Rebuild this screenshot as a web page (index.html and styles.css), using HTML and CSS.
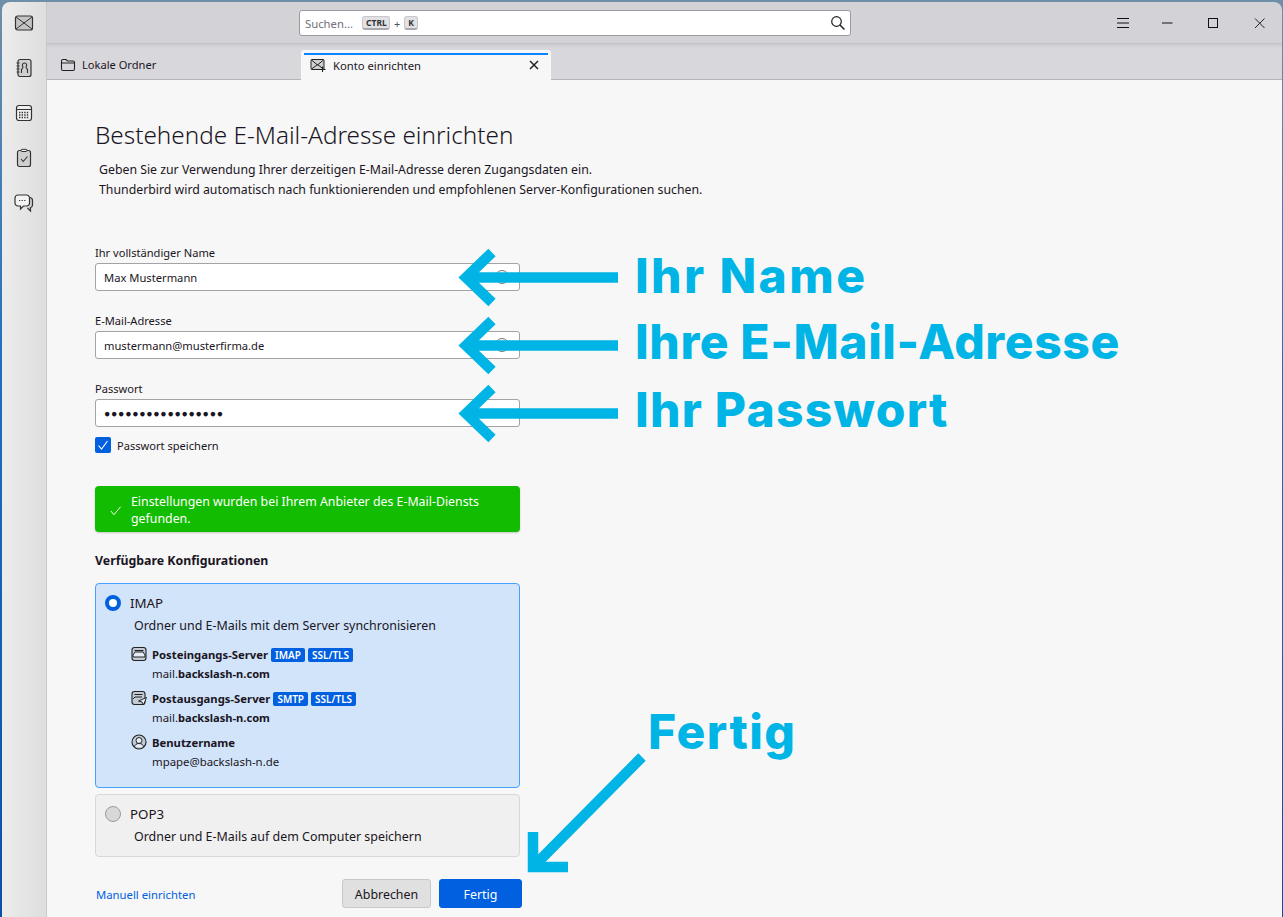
FILE: index.html
```html
<!DOCTYPE html>
<html lang="de">
<head>
<meta charset="utf-8">
<title>Konto einrichten</title>
<link rel="stylesheet" href="styles.css">
</head>
<body>
<div class="window">
  <nav class="rail">
    <svg class="rail-icon" viewBox="0 0 20 20"><rect x="1.500" y="3" width="17" height="14" rx="2" fill="#c4c4c4" stroke="#333" stroke-width="1.200"/><path d="M2 4l8 6 8-6M2 16l8-6 8 6" fill="none" stroke="#333" stroke-width="1"/></svg>
    <svg class="rail-icon" viewBox="0 0 20 20"><rect x="4" y="1.500" width="13" height="17" rx="2" fill="#cfcfcf" stroke="#333" stroke-width="1.200"/><path d="M2.500 5h3M2.500 8h3M2.500 11h3M2.500 14h3" stroke="#333"/><path d="M7.500 15v-3.500c1-1 1.500-1.500 1.500-2.500-1-1-1-4 1.500-4s2.500 3 1.500 4c0 1 .5 1.500 1.500 2.500V15" fill="none" stroke="#333" stroke-width="1.100"/></svg>
    <svg class="rail-icon" viewBox="0 0 20 20"><rect x="2.500" y="2.500" width="15" height="15" rx="2.500" fill="#efefef" stroke="#333" stroke-width="1.200"/><path d="M2.500 6.500h15" stroke="#333" stroke-width="1.200"/><path d="M5 9.500h10M5 12h10M5 14.500h10" stroke="#333" stroke-width="1.300" stroke-dasharray="1.400 1.200"/></svg>
    <svg class="rail-icon" viewBox="0 0 20 20"><rect x="3.500" y="2.500" width="13" height="16" rx="2" fill="#cfcfcf" stroke="#333" stroke-width="1.200"/><rect x="7" y="1.300" width="6" height="2.200" rx="1" fill="#efefef" stroke="#333"/><path d="M7 11l2.200 2.500L13.500 8.500" fill="none" stroke="#333" stroke-width="1.100"/></svg>
    <svg class="rail-icon" viewBox="0 0 20 20"><path d="M12 4.500h3.500a3 3 0 0 1 3 3V12a3 3 0 0 1-2 2.800V18l-3-3" fill="#cfcfcf" stroke="#333" stroke-width="1.200"/><path d="M4 2h8.500a3 3 0 0 1 3 3v5a3 3 0 0 1-3 3H9.500l-3 3v-3H4a3 3 0 0 1-3-3V5a3 3 0 0 1 3-3z" fill="#f4f4f4" stroke="#333" stroke-width="1.200"/><path d="M5 7.500h6.500" stroke="#333" stroke-width="1.200" stroke-dasharray="1.200 1.400"/></svg>
  </nav>

  <div class="main">
    <header class="titlebar">
      <div class="search">
        <span class="search-hint">Suchen...</span>
        <kbd class="key key-ctrl">CTRL</kbd>
        <span class="plus">+</span>
        <kbd class="key">K</kbd>
        <svg class="search-icon" viewBox="0 0 16 16"><circle cx="6.500" cy="6.500" r="4.800" fill="none" stroke="#222" stroke-width="1.200"/><path d="M10 10l4.500 4.500" stroke="#222" stroke-width="1.500"/></svg>
      </div>
      <div class="controls">
        <svg class="ctl ctl-menu" viewBox="0 0 12 12"><path d="M0 1.500h12M0 6h12M0 10.500h12" stroke="#111" stroke-width="1"/></svg>
        <svg class="ctl" viewBox="0 0 12 12"><path d="M1 6h10.500" stroke="#111" stroke-width="1"/></svg>
        <svg class="ctl" viewBox="0 0 12 12"><rect x="1.500" y="1.500" width="9" height="9" fill="none" stroke="#111" stroke-width="1"/></svg>
        <svg class="ctl" viewBox="0 0 12 12"><path d="M2 1.500l9.500 9.500M11.500 1.500L2 11" stroke="#111" stroke-width=".9"/></svg>
      </div>
    </header>

    <div class="tabbar">
      <div class="tab">
        <svg class="tab-icon" viewBox="0 0 16 16"><path d="M1.500 4a1.500 1.500 0 0 1 1.500-1.500h3l1.500 1.500H13A1.500 1.500 0 0 1 14.500 5.500v6.500A1.500 1.500 0 0 1 13 13.500H3A1.500 1.500 0 0 1 1.500 12z" fill="#d8d8dc" stroke="#222" stroke-width="1.100"/><path d="M1.500 6h13" stroke="#222" stroke-width="1"/></svg>
        <span>Lokale Ordner</span>
      </div>
      <div class="tab tab-active">
        <svg class="tab-icon" viewBox="0 0 16 16"><rect x="1" y="2.500" width="13" height="10" rx="1" fill="#cfcfcf" stroke="#222" stroke-width="1"/><path d="M1.500 3l6 5 6-5M1.500 12l6-4.500 6 4.500" fill="none" stroke="#222" stroke-width="1"/><path d="M12.500 9.500v5.500M10 12.500h5.500" stroke="#222" stroke-width="1.100"/></svg>
        <span class="tab-label">Konto einrichten</span>
        <svg class="tab-close" viewBox="0 0 12 12"><path d="M2 2l8 8M10 2l-8 8" stroke="#222" stroke-width="1.500"/></svg>
      </div>
    </div>

    <main class="content">
      <h1 class="title">Bestehende E-Mail-Adresse einrichten</h1>
      <p class="intro">Geben Sie zur Verwendung Ihrer derzeitigen E-Mail-Adresse deren Zugangsdaten ein.</p>
      <p class="intro">Thunderbird wird automatisch nach funktionierenden und empfohlenen Server-Konfigurationen suchen.</p>

      <form class="form">
        <label class="field-label">Ihr vollständiger Name</label>
        <div class="input"><span>Max Mustermann</span><i class="info"></i></div>
        <label class="field-label">E-Mail-Adresse</label>
        <div class="input"><span>mustermann@musterfirma.de</span><i class="info"></i></div>
        <label class="field-label">Passwort</label>
        <div class="input"><span class="dots">●●●●●●●●●●●●●●●●●</span></div>
        <div class="remember">
          <span class="checkbox"><svg viewBox="0 0 16 16"><path d="M3.500 8.500l3 3.500 6-8" fill="none" stroke="#fff" stroke-width="1.100"/></svg></span>
          <span>Passwort speichern</span>
        </div>

        <div class="notice">
          <svg class="notice-icon" viewBox="0 0 14 14"><path d="M2 7.500l3.300 4L12.500 3" fill="none" stroke="#fff" stroke-width="1"/></svg>
          <span>Einstellungen wurden bei Ihrem Anbieter des E-Mail-Diensts gefunden.</span>
        </div>

        <h2 class="config-title">Verfügbare Konfigurationen</h2>

        <section class="card card-selected">
          <div class="card-head"><span class="radio radio-on"></span><span>IMAP</span></div>
          <p class="card-desc">Ordner und E-Mails mit dem Server synchronisieren</p>
          <div class="server">
            <svg class="server-icon" viewBox="0 0 16 16"><rect x="1" y="1.500" width="14" height="13" rx="2.500" fill="#c3cbd6" stroke="#222" stroke-width="1.100"/><path d="M3.500 4.500h9M2 9l2-3h8l2 3v2H2z" fill="#e6edf7" stroke="#222" stroke-width="1"/></svg>
            <div class="server-title"><b>Posteingangs-Server</b><span class="badge">IMAP</span><span class="badge">SSL/TLS</span></div>
            <div class="server-value">mail.<b>backslash-n.com</b></div>
          </div>
          <div class="server">
            <svg class="server-icon" viewBox="0 0 16 16"><rect x="1" y="1.500" width="13" height="13" rx="2.500" fill="#c3cbd6" stroke="#222" stroke-width="1.100"/><path d="M3.500 4.500h8M2 9l2-2h7" fill="none" stroke="#222" stroke-width="1"/><path d="M7.500 11l8-3.500-3 7.500-1.500-3z" fill="#e6edf7" stroke="#222" stroke-width="1"/></svg>
            <div class="server-title"><b>Postausgangs-Server</b><span class="badge">SMTP</span><span class="badge">SSL/TLS</span></div>
            <div class="server-value">mail.<b>backslash-n.com</b></div>
          </div>
          <div class="server">
            <svg class="server-icon" viewBox="0 0 16 16"><circle cx="8" cy="8" r="7" fill="#c3cbd6" stroke="#222" stroke-width="1.100"/><circle cx="8" cy="6.500" r="3" fill="#e6edf7" stroke="#222"/><path d="M3.500 13c.5-2.500 2-3.500 4.500-3.500s4 1 4.500 3.500" fill="#e6edf7" stroke="#222"/></svg>
            <div class="server-title"><b>Benutzername</b></div>
            <div class="server-value">mpape@backslash-n.de</div>
          </div>
        </section>

        <section class="card card-plain">
          <div class="card-head"><span class="radio"></span><span>POP3</span></div>
          <p class="card-desc">Ordner und E-Mails auf dem Computer speichern</p>
        </section>

        <div class="actions">
          <a class="manual">Manuell einrichten</a>
          <button type="button" class="btn btn-cancel">Abbrechen</button>
          <button type="button" class="btn btn-primary">Fertig</button>
        </div>
      </form>
    </main>
  </div>
</div>

<svg class="arrows" viewBox="0 0 1283 917">
  <g fill="none" stroke="#00b5e5" stroke-width="10.500">
    <path d="M492 252.500L466 277.500L492 302.500M468 277.500H618"/>
    <path d="M492 320.500L466 345.500L492 370.500M468 345.500H618"/>
    <path d="M492 388.500L466 413.500L492 438.500M468 413.500H618"/>
    <path d="M533 832V867H568M536 864L642 757"/>
  </g>
</svg>
<span class="note note-name">Ihr Name</span>
<span class="note note-mail">Ihre E-Mail-Adresse</span>
<span class="note note-pass">Ihr Passwort</span>
<span class="note note-done">Fertig</span>
</body>
</html>
```

FILE: styles.css
```css
* { box-sizing: border-box; }
html, body { margin: 0; height: 917px; overflow: hidden; }
body {
  position: relative;
  padding: 2px 1px 0 2px;
  background: linear-gradient(180deg, #6f8fa8 0, #1f6fc0 40%, #0b4fa8 100%);
  font-family: "Noto Sans", "Open Sans", sans-serif;
  font-size: 12px;
  color: #1a1523;
}
.window {
  display: flex;
  height: 915px;
  border-radius: 8px 8px 0 0;
  overflow: hidden;
}
.rail {
  width: 45px;
  flex: none;
  display: flex;
  flex-direction: column;
  align-items: center;
  gap: 25px;
  padding-top: 11px;
  background: linear-gradient(90deg, #ececec, #dedede);
  border-right: 1px solid #c9c9c9;
}
.rail-icon { width: 20px; height: 20px; display: block; }
.main { flex: 1; display: flex; flex-direction: column; min-width: 0; }

.titlebar {
  height: 41px;
  flex: none;
  position: relative;
  display: flex;
  justify-content: flex-end;
  align-items: center;
  background: #d3d2d7;
}
.search {
  position: absolute;
  left: 252px;
  top: 8px;
  width: 552px;
  height: 26px;
  display: flex;
  align-items: center;
  padding: 0 5px;
  background: #fff;
  border: 1px solid #9b9aa2;
  border-radius: 3px;
}
.search-hint { color: #70707a; font-size: 11.300px; margin-right: 9px; }
.key {
  font-family: "Noto Sans", sans-serif;
  font-size: 8.500px;
  font-weight: 700;
  color: #333;
  background: #e2e2e4;
  border: 1px solid #c8c8cc;
  border-bottom: 2px solid #a9a9ae;
  border-radius: 3px;
  height: 14px;
  line-height: 11px;
  padding: 0 3px;
}
.key-ctrl { width: 28px; text-align: center; }
.plus { margin: 0 4px; color: #555; font-size: 11px; }
.search-icon { position: absolute; right: 4px; top: 4px; width: 16px; height: 16px; }
.controls {
  display: flex;
  align-items: center;
  gap: 34px;
  padding-right: 17px;
}
.ctl { width: 12px; height: 12px; display: block; }
.ctl-menu { margin-right: -2px; }

.tabbar {
  height: 37px;
  flex: none;
  display: flex;
  align-items: flex-end;
  background: #d8d8dc;
  border-bottom: 1px solid #b4b4b8;
  box-shadow: inset 0 4px 4px -3px rgba(0,0,0,.15);
}
.tab {
  width: 254px;
  height: 30px;
  display: flex;
  align-items: center;
  gap: 6px;
  padding-left: 13px;
  padding-top: 1px;
  font-size: 11.100px;
}
.tab-active {
  position: relative;
  width: 250px;
  height: 30px;
  margin-bottom: -1px;
  padding-left: 9px;
  padding-top: 0;
  gap: 7px;
  font-size: 11.250px;
  background: #f7f7f7;
  border-radius: 3px 3px 0 0;
}
.tab-active::before {
  content: "";
  position: absolute;
  left: 3px;
  right: 3px;
  top: 3px;
  height: 2px;
  background: #0a84ff;
}
.tab-icon { width: 16px; height: 16px; flex: none; }
.tab-label { flex: 1; }
.tab-close { width: 12px; height: 12px; margin-right: 11px; }

.content {
  flex: 1;
  background: #f7f7f7;
  padding: 40px 0 0 48px;
}
.title {
  margin: 0 0 10px;
  font-size: 24.300px;
  line-height: 30px;
  font-weight: 300;
  color: #1a1523;
}
.intro { margin: 0 0 0 4px; font-size: 12.300px; line-height: 19.500px; }
.form { width: 427px; margin-top: 45px; }
.field-label { display: block; font-size: 11.100px; line-height: 18px; margin-bottom: 1px; }
.input {
  position: relative;
  width: 425px;
  height: 28px;
  display: flex;
  align-items: center;
  padding-left: 8px;
  margin-bottom: 21px;
  background: #fff;
  border: 1px solid #a3a3a6;
  border-radius: 3px;
  font-size: 11.200px;
}
.input:nth-of-type(3) { margin-bottom: 10px; }
.dots { font-size: 10.500px; letter-spacing: .7px; }
.info {
  position: absolute;
  right: 10px;
  top: 6px;
  width: 14px;
  height: 14px;
  border: 1px solid #777;
  border-radius: 50%;
}
.remember { display: flex; align-items: center; gap: 6px; height: 16px; font-size: 11.100px; }
.checkbox {
  width: 16px;
  height: 16px;
  background: #0060df;
  border-radius: 2px;
  display: block;
}
.checkbox svg { display: block; }
.notice {
  width: 425px;
  height: 46px;
  margin-top: 33px;
  display: flex;
  align-items: center;
  gap: 9px;
  padding: 2px 20px 0 14px;
  background: #12bc00;
  color: #fff;
  border-radius: 4px;
  box-shadow: 0 1px 2px rgba(0,0,0,.2);
  font-size: 12.350px;
  line-height: 17.500px;
}
.notice-icon { width: 13px; height: 13px; flex: none; }
.config-title {
  margin: 20px 0 13px;
  font-size: 12.350px;
  line-height: 18px;
  font-weight: 700;
}
.card {
  width: 425px;
  border-radius: 4px;
  padding: 10px 9px 0;
}
.card-selected {
  height: 205px;
  background: #d2e4f9;
  border: 1px solid #45a1ff;
}
.card-plain {
  height: 63px;
  margin-top: 6px;
  background: #f0f0f0;
  border: 1px solid #d8d8d8;
}
.card-head { display: flex; align-items: center; gap: 9px; height: 18px; font-size: 13.300px; }
.radio {
  width: 16px;
  height: 16px;
  border-radius: 50%;
  background: #d8d8d8;
  border: 1px solid #9a9a9a;
  flex: none;
}
.radio-on { background: #fff; border: 4px solid #0060df; }
.card-desc { margin: 4px 0 0 29px; font-size: 12.450px; line-height: 20px; }
.card-selected .card-desc { margin-bottom: 9px; }
.server {
  position: relative;
  padding-left: 47px;
  height: 44px;
  font-size: 11.400px;
}
.server-icon { position: absolute; left: 26px; top: 1px; width: 16px; height: 16px; }
.server-title { display: flex; align-items: center; gap: 3px; height: 19px; }
.server-title b { font-size: 11.300px; }
.server-value { line-height: 19px; font-size: 11.400px; }
.server-value b { font-size: 11.100px; }
.badge {
  height: 14px;
  line-height: 14px;
  padding: 0 4px;
  background: #0060df;
  color: #fff;
  font-weight: 600;
  font-size: 10px;
  border-radius: 2px;
}
.actions {
  display: flex;
  align-items: center;
  gap: 8px;
  width: 427px;
  height: 29px;
  margin-top: 22px;
  padding-left: 1px;
}
.manual { flex: 1; padding-top: 1px; color: #0060df; font-size: 11.300px; }
.btn {
  height: 29px;
  border-radius: 3px;
  font-family: inherit;
  font-size: 12.400px;
  padding: 1px 0 0;
}
.btn-cancel { width: 89px; background: #e0e0e0; border: 1px solid #c8c8c8; color: #1a1523; }
.btn-primary { width: 83px; background: #0060df; border: 1px solid #0060df; color: #fff; }

.arrows { position: absolute; left: 0; top: 0; width: 1283px; height: 917px; pointer-events: none; }
.note {
  position: absolute;
  left: 635px;
  font-family: Inter, "Open Sans", sans-serif;
  font-weight: 800;
  font-size: 48px;
  line-height: 56px;
  color: #00b5e5;
  white-space: nowrap;
}
.note-name { top: 248px; letter-spacing: 2.400px; }
.note-mail { top: 314px; letter-spacing: .6px; }
.note-pass { top: 382px; letter-spacing: 1.250px; }
.note-done { top: 704px; left: 648px; letter-spacing: 1.500px; }
```
